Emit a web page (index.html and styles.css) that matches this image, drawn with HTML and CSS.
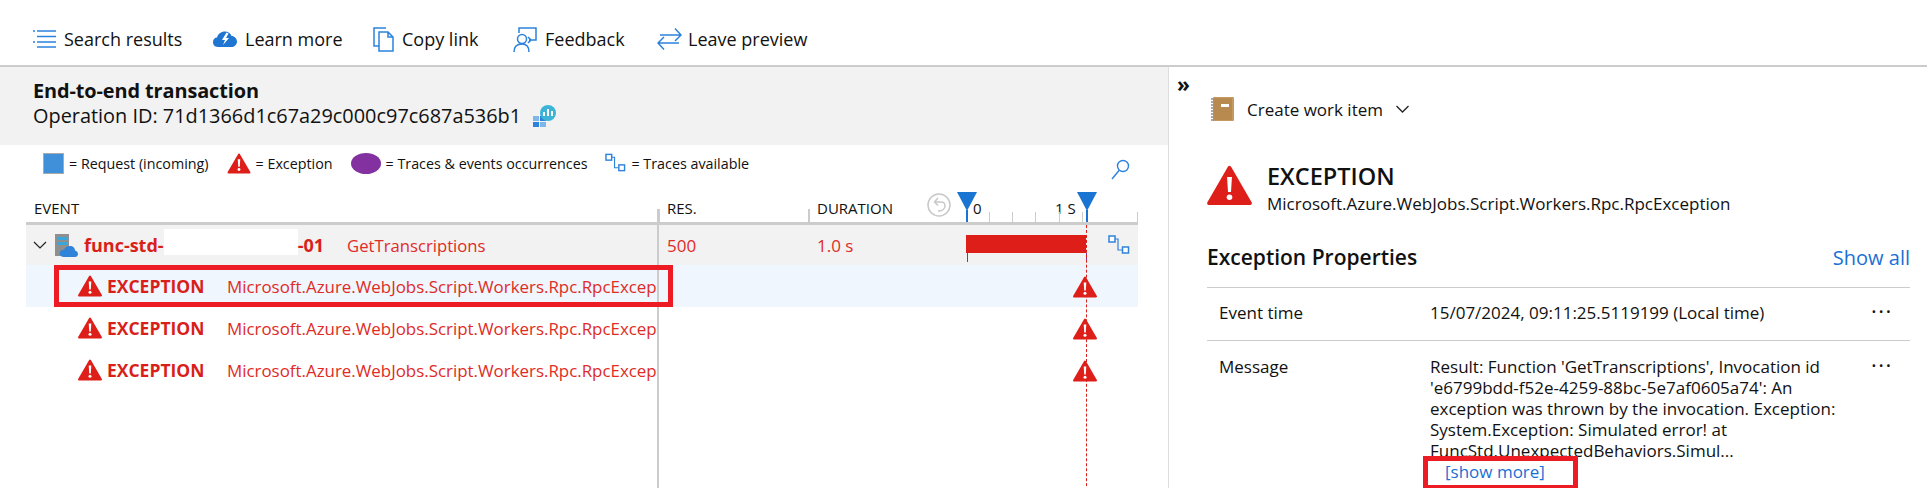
FILE: index.html
```html
<!DOCTYPE html>
<html>
	<head>
		<meta http-equiv="Content-Type" content="text/html;charset=UTF-8" />
		<title>End-to-end transaction</title>
		<link rel="stylesheet" href="styles.css">
	</head>
	<body>

		<svg class="defs" width="0" height="0">
			<symbol id="alert" viewBox="0 0 24 22">
				<path d="M12 1.5 L23 20.5 H1 Z" fill="#de1f19" stroke="#de1f19" stroke-width="2" stroke-linejoin="round" />
				<path d="M10.7 6.5 H13.3 L12.8 14.5 H11.2 Z" fill="#fff" />
				<circle cx="12" cy="17.3" r="1.5" fill="#fff" />
			</symbol>
			<symbol id="traces" viewBox="0 0 22 20">
				<path d="M7 4 H10 V15 H14" fill="none" stroke="#2f83d9" stroke-width="1.2" />
				<rect x="1" y="1" width="6" height="6" fill="#fff" stroke="#2f83d9" stroke-width="1.5" />
				<rect x="14.5" y="12" width="6" height="6" fill="#fff" stroke="#2f83d9" stroke-width="1.5" />
			</symbol>
		</svg>

		<div class="toolbar">
			<a class="tool tool-search">
				<svg width="23" height="20" viewBox="0 0 23 20">
					<path d="M4 2 H23 M4 7.5 H23 M4 13 H23 M4 18 H23" stroke="#2b82dc" stroke-width="1.4" />
					<path d="M0 2 H2 M0 13 H2" stroke="#2b82dc" stroke-width="1.4" />
				</svg>
				Search results
			</a>
			<a class="tool tool-learn">
				<svg width="24" height="16" viewBox="0 0 24 16">
					<path d="M5 16 C1 16 0 13 0 11 C0 8 2 6.500 4 6.500 C5 3 8 0.500 12 0.500 C15 0.500 17.500 2 18.500 5 C21.500 5 24 7.500 24 10.500 C24 14 21 16 18.500 16 Z" fill="#1f76d2" />
					<path d="M13.500 1.500 L9 9 H12 L10 14 L16 7 H13 L15.500 2.500 Z" fill="#fff" />
				</svg>
				Learn more
			</a>
			<a class="tool tool-copy">
				<svg width="21" height="25" viewBox="0 0 21 25">
					<path d="M13 1 H1 V19 H6" fill="none" stroke="#2b82dc" stroke-width="1.5" />
					<path d="M6 5 H15 L20 10 V24 H6 Z M15 5 V10 H20" fill="#fff" stroke="#2b82dc" stroke-width="1.5" />
				</svg>
				Copy link
			</a>
			<a class="tool tool-feedback">
				<svg width="24" height="25" viewBox="0 0 24 25">
					<path d="M6 6 V1 H23 V13 H16 M15 10 L18 13 L15 16" fill="none" stroke="#2b82dc" stroke-width="1.5" />
					<circle cx="9" cy="12" r="4.500" fill="none" stroke="#2b82dc" stroke-width="1.5" />
					<path d="M1 25 C1 19 4.500 17 9 17 C13.500 17 16 19 16 25" fill="none" stroke="#2b82dc" stroke-width="1.5" />
				</svg>
				Feedback
			</a>
			<a class="tool tool-leave">
				<svg width="25" height="24" viewBox="0 0 25 24">
					<path d="M3 8 H24 M18 1.500 L24 8 L18 14" fill="none" stroke="#2b82dc" stroke-width="1.5" />
					<path d="M22 16 H1 M7 10 L1 16 L7 22.500" fill="none" stroke="#2b82dc" stroke-width="1.5" />
				</svg>
				Leave preview
			</a>
		</div>

		<div class="main">

			<div class="left">
				<div class="heading">
					<div class="heading-title">End-to-end transaction</div>
					<div class="heading-id">
						Operation ID: 71d1366d1c67a29c000c97c687a536b1
						<svg width="24" height="22" viewBox="0 0 24 22">
							<rect x="0" y="11" width="6" height="5" fill="#7db7e8" />
							<rect x="7" y="11" width="6" height="5" fill="#2b82dc" />
							<rect x="0" y="17" width="6" height="5" fill="#2b82dc" />
							<rect x="7" y="17" width="6" height="5" fill="#7db7e8" />
							<circle cx="15" cy="8" r="8" fill="#3bb4d8" />
							<path d="M11 7 V11 M15 4 V11 M19 6 V11" stroke="#fff" stroke-width="2" />
						</svg>
					</div>
				</div>

				<div class="legend">
					<span class="legend-item"><i class="key-request"></i>= Request (incoming)</span>
					<span class="legend-item"><svg width="24" height="21"><use href="#alert" /></svg>= Exception</span>
					<span class="legend-item"><i class="key-traces"></i>= Traces &amp; events occurrences</span>
					<span class="legend-item"><svg width="21" height="20"><use href="#traces" /></svg>= Traces available</span>
					<svg class="legend-search" width="19" height="21" viewBox="0 0 19 21">
						<circle cx="12" cy="7" r="5.500" fill="none" stroke="#2b82dc" stroke-width="1.4" />
						<path d="M8 11.500 L1 20" stroke="#2b82dc" stroke-width="1.4" />
					</svg>
				</div>

				<div class="table">
					<div class="row row-head">
						<div class="cell">EVENT</div>
						<div class="cell cell-tick">RES.</div>
						<div class="cell cell-tick">DURATION</div>
						<div class="scale">
							<svg class="scale-undo" width="24" height="24" viewBox="0 0 24 24">
								<circle cx="12" cy="12" r="11" fill="#fff" stroke="#c8c8c8" stroke-width="1.500" />
								<path d="M8 9 H14 C17 9 18 11 18 13 C18 16 15 18 11 18 M11 5 L7.500 9 L11 12.500" fill="none" stroke="#c8c8c8" stroke-width="1.500" />
							</svg>
							<span class="scale-label scale-zero">0</span>
							<span class="scale-label scale-one">1 S</span>
							<i class="tick tick-1"></i><i class="tick tick-2"></i><i class="tick tick-3"></i><i class="tick tick-4"></i><i class="tick tick-5"></i><i class="tick tick-6"></i>
							<i class="marker marker-start"></i>
							<i class="marker marker-end"></i>
						</div>
					</div>

					<div class="row row-parent">
						<div class="cell cell-event">
							<svg class="chevron" width="14" height="8" viewBox="0 0 14 8">
								<path d="M1 1 L7 7 L13 1" fill="none" stroke="#222" stroke-width="1.200" />
							</svg>
							<svg class="server" width="23" height="23" viewBox="0 0 23 23">
								<rect x="0" y="0" width="14" height="22" fill="#8f8f8f" />
								<rect x="2" y="3" width="10" height="3" fill="#3aa7dc" />
								<rect x="2" y="8" width="10" height="3" fill="#3aa7dc" />
								<path d="M9 23 C5 23 4 20 5 18 C6 16 7.500 15.500 9 16 C10 13 12 12 15 12 C18 12 20 14 20 16.500 C22 17 23 18.500 23 20 C23 22 21.500 23 20 23 Z" fill="#2f83d9" />
							</svg>
							<b class="name">func-std-</b><span class="redacted"></span><b class="name">-01</b>
							<span class="op">GetTranscriptions</span>
						</div>
						<div class="cell cell-value">500</div>
						<div class="cell cell-value">1.0 s</div>
						<div class="lane">
							<i class="bar"></i>
							<i class="occ occ-start"></i>
							<i class="occ occ-end"></i>
							<svg class="lane-traces" width="22" height="20"><use href="#traces" /></svg>
						</div>
					</div>

					<div class="row row-exception row-selected">
						<div class="cell cell-exception">
							<svg width="24" height="22"><use href="#alert" /></svg>
							<b class="exc-title">EXCEPTION</b>
							<span class="exc-name">Microsoft.Azure.WebJobs.Script.Workers.Rpc.RpcExcep</span>
						</div>
						<div></div><div></div>
						<div class="lane"><svg class="lane-alert" width="24" height="22"><use href="#alert" /></svg></div>
					</div>

					<div class="row row-exception">
						<div class="cell cell-exception">
							<svg width="24" height="22"><use href="#alert" /></svg>
							<b class="exc-title">EXCEPTION</b>
							<span class="exc-name">Microsoft.Azure.WebJobs.Script.Workers.Rpc.RpcExcep</span>
						</div>
						<div></div><div></div>
						<div class="lane"><svg class="lane-alert" width="24" height="22"><use href="#alert" /></svg></div>
					</div>

					<div class="row row-exception">
						<div class="cell cell-exception">
							<svg width="24" height="22"><use href="#alert" /></svg>
							<b class="exc-title">EXCEPTION</b>
							<span class="exc-name">Microsoft.Azure.WebJobs.Script.Workers.Rpc.RpcExcep</span>
						</div>
						<div></div><div></div>
						<div class="lane"><svg class="lane-alert" width="24" height="22"><use href="#alert" /></svg></div>
					</div>

					<i class="column-line"></i>
					<i class="end-line"></i>
				</div>

				<div class="callout callout-row"></div>
			</div>

			<div class="right">
				<div class="collapse">»</div>
				<div class="work-item">
					<svg width="23" height="24" viewBox="0 0 23 24">
						<rect x="2" y="0" width="21" height="24" rx="1" fill="#c49a63" />
						<rect x="3" y="1" width="18" height="22" fill="#b98a50" />
						<path d="M0 2 H3 M0 5 H3 M0 8 H3 M0 11 H3 M0 14 H3 M0 17 H3 M0 20 H3 M0 23 H3" stroke="#8d8d8d" stroke-width="1.500" />
						<rect x="10" y="7" width="8" height="3" fill="#fff" />
					</svg>
					Create work item
					<svg width="13" height="8" viewBox="0 0 13 8">
						<path d="M.5 1 L6.500 7 L12.500 1" fill="none" stroke="#222" stroke-width="1.300" />
					</svg>
				</div>

				<div class="summary">
					<svg width="45" height="41"><use href="#alert" /></svg>
					<div>
						<div class="summary-title">EXCEPTION</div>
						<div class="summary-name">Microsoft.Azure.WebJobs.Script.Workers.Rpc.RpcException</div>
					</div>
				</div>

				<div class="props-head">
					<div class="props-title">Exception Properties</div>
					<a class="show-all">Show all</a>
				</div>

				<div class="prop prop-time">
					<div class="prop-key">Event time</div>
					<div class="prop-value">15/07/2024, 09:11:25.5119199 (Local time)</div>
					<div class="prop-more">···</div>
				</div>
				<div class="prop prop-message">
					<div class="prop-key">Message</div>
					<div class="prop-value">
						Result: Function 'GetTranscriptions', Invocation id 'e6799bdd-f52e-4259-88bc-5e7af0605a74': An exception was thrown by the invocation. Exception: System.Exception: Simulated error! at FuncStd.UnexpectedBehaviors.Simul...
						<a class="show-more">[show more]</a>
					</div>
					<div class="prop-more">···</div>
				</div>

				<div class="callout callout-more"></div>
			</div>

		</div>

	</body>
</html>
```

FILE: styles.css
```css
body {
	color: #111;
	font: 18px "Open Sans", sans-serif;
	height: 488px;
	margin: 0;
	overflow: hidden;
}

.defs {
	position: absolute;
}

svg {
	display: block;
	flex: none;
}

/* toolbar */

.toolbar {
	align-items: center;
	border-bottom: 2px solid #ccc;
	box-sizing: border-box;
	display: flex;
	height: 67px;
	padding: 13px 0 0 33px;
}

.tool {
	align-items: center;
	display: flex;
	gap: 8px;
	white-space: nowrap;
}

.tool-search { width: 180px; }
.tool-learn { width: 160px; }
.tool-copy { width: 140px; }
.tool-feedback { width: 144px; }
.tool-leave { gap: 6px; }

/* left side */

.main {
	display: flex;
	height: 421px;
}

.left {
	border-right: 1px solid #ddd;
	box-sizing: border-box;
	flex: none;
	position: relative;
	width: 1169px;
}

.heading {
	background: #f2f2f2;
	box-sizing: border-box;
	font-size: 19.9px;
	height: 78px;
	line-height: 25px;
	padding: 11px 0 0 33px;
}

.heading-title {
	font-weight: 700;
	letter-spacing: -0.1px;
}

.heading-id {
	align-items: center;
	display: flex;
	gap: 12px;
}

.legend {
	align-items: center;
	display: flex;
	font-size: 14.3px;
	gap: 18px;
	height: 36px;
	padding-left: 43px;
	position: relative;
}

.legend-item {
	align-items: center;
	display: flex;
	gap: 5px;
}

.key-request {
	background: #3f8fd9;
	border: 1px solid #aaa;
	box-sizing: border-box;
	height: 21px;
	width: 21px;
}

.key-traces {
	background: #8331a0;
	border-radius: 50%;
	height: 21px;
	width: 30px;
}

.legend-search {
	position: absolute;
	right: 38px;
	top: 14px;
}

/* table */

.table {
	margin: 5px 0 0 26px;
	position: relative;
	width: 1112px;
}

.row {
	display: grid;
	grid-template-columns: 632px 150px 158px 172px;
	height: 42px;
}

.row-head {
	border-bottom: 3px solid #ccc;
	box-sizing: border-box;
	font-size: 15px;
	height: 39px;
}

.row-head .cell {
	align-items: flex-end;
	padding-bottom: 4px;
}

.cell {
	align-items: center;
	box-sizing: border-box;
	display: flex;
	padding-left: 8px;
	white-space: nowrap;
}

.cell-tick {
	padding-left: 9px;
	position: relative;
}

.cell-tick::before {
	background: #ccc;
	bottom: 0;
	content: "";
	height: 13px;
	left: 0;
	position: absolute;
	width: 2px;
}

.row-parent {
	background: #f2f2f2;
	color: #e02b26;
	height: 40px;
}

.row-selected {
	background: #eff6fd;
}

.cell-value {
	font-size: 17px;
	padding-left: 9px;
}

.chevron {
	margin-left: -1px;
	margin-right: 8px;
}

.server {
	margin-right: 6px;
}

.name {
	color: #d91f1a;
	font-size: 18px;
}

.redacted {
	align-self: flex-start;
	background: #fff;
	flex: none;
	height: 26px;
	margin-top: 4px;
	width: 134px;
}

.op {
	font-size: 16.7px;
	margin-left: 23px;
}

.cell-exception {
	padding-left: 52px;
}

.exc-title {
	color: #d91f1a;
	flex: none;
	font-size: 17.5px;
	margin-left: 5px;
	width: 120px;
}

.exc-name {
	color: #e02b26;
	font-size: 16.9px;
}

/* timeline, things on it sit at their own time offset */

.scale,
.lane {
	position: relative;
}

.scale-undo {
	left: -39px;
	position: absolute;
	top: 7px;
}

.scale-label {
	bottom: 4px;
	position: absolute;
}

.scale-zero { left: 7px; }
.scale-one { left: 89px; }

.tick {
	background: #ccc;
	bottom: 0;
	height: 10px;
	position: absolute;
	width: 1px;
}

.tick-1 { left: 23px; }
.tick-2 { left: 46px; }
.tick-3 { left: 69px; }
.tick-4 { left: 93px; }
.tick-5 { left: 116px; }
.tick-6 { left: 171px; }

.marker {
	background: #1a75d2;
	bottom: 0;
	height: 12px;
	position: absolute;
	width: 2px;
}

.marker::before {
	border-left: 10px solid transparent;
	border-right: 10px solid transparent;
	border-top: 19px solid #1a75d2;
	content: "";
	left: -9px;
	position: absolute;
	top: -18px;
}

.marker-start { left: 0; }
.marker-end { left: 120px; }

.bar {
	background: #de1f19;
	height: 18px;
	left: 0;
	position: absolute;
	top: 10px;
	width: 120px;
}

.occ {
	background: #8331a0;
	height: 9px;
	position: absolute;
	top: 28px;
	width: 1px;
}

.occ-start { left: 1px; }
.occ-end { left: 120px; }

.lane-traces {
	left: 142px;
	position: absolute;
	top: 10px;
}

.lane-alert {
	left: 107px;
	position: absolute;
	top: 11px;
	z-index: 1;
}

.column-line {
	background: #ccc;
	bottom: -110px;
	left: 631px;
	position: absolute;
	top: 23px;
	width: 2px;
}

.end-line {
	border-left: 1px dashed #d91f1a;
	bottom: -110px;
	left: 1060px;
	position: absolute;
	top: 39px;
}

/* red annotation boxes */

.callout {
	border: 5px solid #ed1c24;
	box-sizing: border-box;
	position: absolute;
}

.callout-row {
	height: 42px;
	left: 54px;
	top: 198px;
	width: 619px;
}

.callout-more {
	height: 34px;
	left: 254px;
	top: 389px;
	width: 155px;
}

/* right side */

.right {
	box-sizing: border-box;
	flex: 1;
	padding: 0 17px 0 38px;
	position: relative;
}

.collapse {
	font-size: 21px;
	font-weight: 700;
	left: 8px;
	line-height: 20px;
	position: absolute;
	top: 7px;
}

.work-item {
	align-items: center;
	display: flex;
	font-size: 17px;
	gap: 13px;
	padding: 30px 0 0 4px;
}

.summary {
	display: flex;
	gap: 15px;
	margin-top: 44px;
}

.summary-title {
	font-size: 23.5px;
	font-weight: 600;
	line-height: 30px;
	margin-top: -4px;
}

.summary-name {
	font-size: 17px;
	line-height: 25px;
}

.props-head {
	align-items: center;
	border-bottom: 1px solid #ccc;
	display: flex;
	height: 60px;
	justify-content: space-between;
	margin-top: 11px;
}

.props-title {
	font-size: 21px;
	font-weight: 600;
}

.show-all {
	color: #1a6fd4;
	font-size: 20px;
}

.prop {
	display: grid;
	font-size: 17px;
	grid-template-columns: 211px 441px 1fr;
	line-height: 21px;
	padding: 15px 0 0 12px;
}

.prop-time {
	border-bottom: 1px solid #ccc;
	height: 38px;
	padding-top: 14px;
}

.prop-value {
	width: 410px;
}

.prop-more {
	font-size: 22px;
	letter-spacing: 1.5px;
	line-height: 16px;
}

.show-more {
	color: #1a6fd4;
	display: block;
	padding-left: 15px;
}
```
